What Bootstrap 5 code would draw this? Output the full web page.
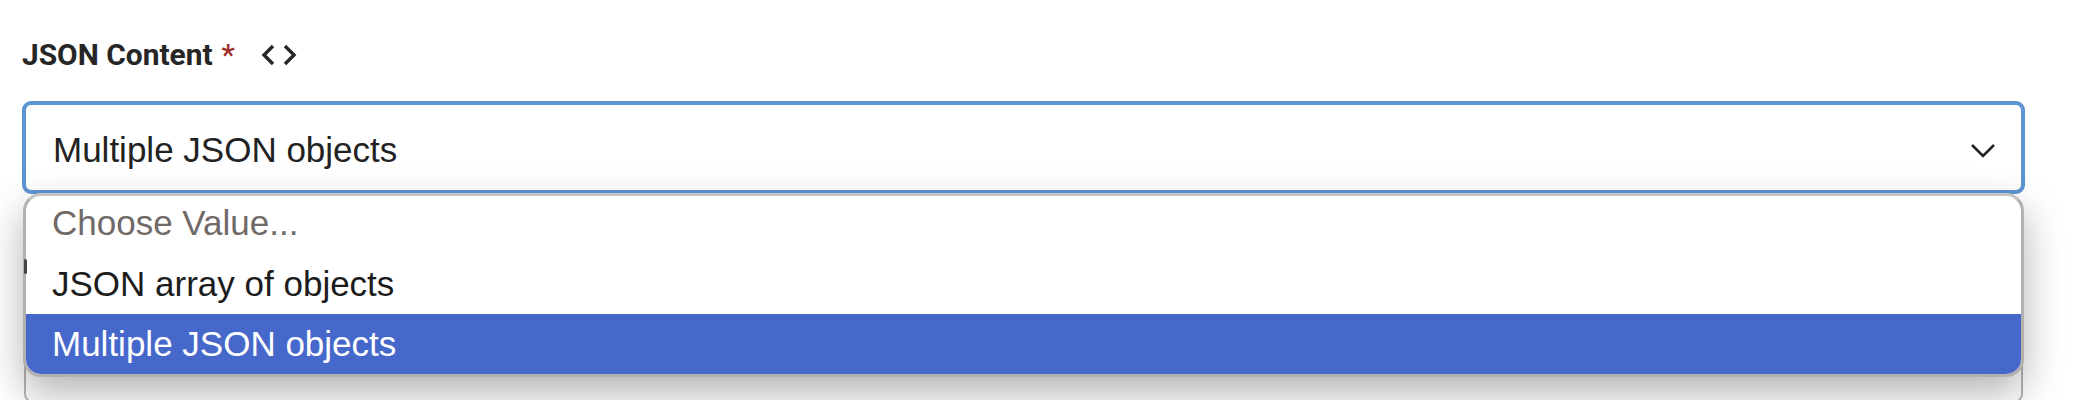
<!DOCTYPE html>
<html lang="en">
<head>
<meta charset="utf-8">
<title>JSON Content</title>
<link href="https://cdn.jsdelivr.net/npm/bootstrap@5.3.0/dist/css/bootstrap.min.css" rel="stylesheet">
<style>
html,body{height:400px;overflow:hidden;background:#fff}
.page-wrap{padding:36px 50px 0 22px}
.field-label{font-family:Roboto,sans-serif;font-weight:700;font-size:29.9px;line-height:38px;color:#262626;margin:0 0 27px}
.req-star{color:#9e2a2b;margin-left:9px;font-weight:500}
.code-ico{width:36px;height:28px;margin-left:26px;color:#262626}
.select-wrap{z-index:2}
.select-box{height:93px;border:4px solid #5b96d2;border-radius:9px;padding:5px 25px 0 27px;font-family:"Liberation Sans",Arial,sans-serif;font-size:35px;color:#222;background:#fff}
.chev-ico{width:26px;height:15px;color:#222}
.option-menu{top:92px;left:1px;right:1px;z-index:5;background:#fff;border:3px solid #b3b0ae;border-top-color:#c4c4c4;border-radius:18px;box-shadow:0 16px 40px rgba(0,0,0,.3);font-family:"Liberation Sans",Arial,sans-serif;font-size:35px;overflow:hidden;padding:0}
.option-row{height:59px;padding:0 26px;color:#1c1c1c}
.option-muted{color:#6f6a67;padding-bottom:4px}
.option-plain{padding-bottom:1px}
.option-active{height:60px;padding-top:1px;background:#4668cb;color:#fff}
.peek-mark{z-index:3;width:3px;height:15px;margin:65px 0 0 2px;background:#444;border-radius:3px}
.next-box{height:90px;margin:39px 2px 0 2px;border:2px solid #b5b5b5;border-radius:9px}
</style>
</head>
<body>
<div class="page-wrap">
  <div class="field-label d-flex align-items-center">
    <span>JSON Content</span><span class="req-star">*</span>
    <svg class="code-ico" viewBox="0 0 36 28" fill="none" stroke="currentColor" stroke-width="3.4"><path d="M12 5 3 14l9 9"/><path d="M24 5l9 9-9 9"/></svg>
  </div>
  <div class="select-wrap position-relative">
    <div class="select-box d-flex align-items-center justify-content-between">
      <span>Multiple JSON objects</span>
      <svg class="chev-ico" viewBox="0 0 26 15" fill="none" stroke="currentColor" stroke-width="2.6"><path d="M2 2l11 11L24 2"/></svg>
    </div>
    <div class="option-menu position-absolute d-flex flex-column">
      <div class="option-row option-muted d-flex align-items-center">Choose Value...</div>
      <div class="option-row option-plain d-flex align-items-center">JSON array of objects</div>
      <div class="option-row option-active d-flex align-items-center">Multiple JSON objects</div>
    </div>
  </div>
  <div class="peek-mark position-relative"></div>
  <div class="next-box"></div>
</div>
<script src="https://cdn.jsdelivr.net/npm/bootstrap@5.3.0/dist/js/bootstrap.bundle.min.js"></script>
</body>
</html>
